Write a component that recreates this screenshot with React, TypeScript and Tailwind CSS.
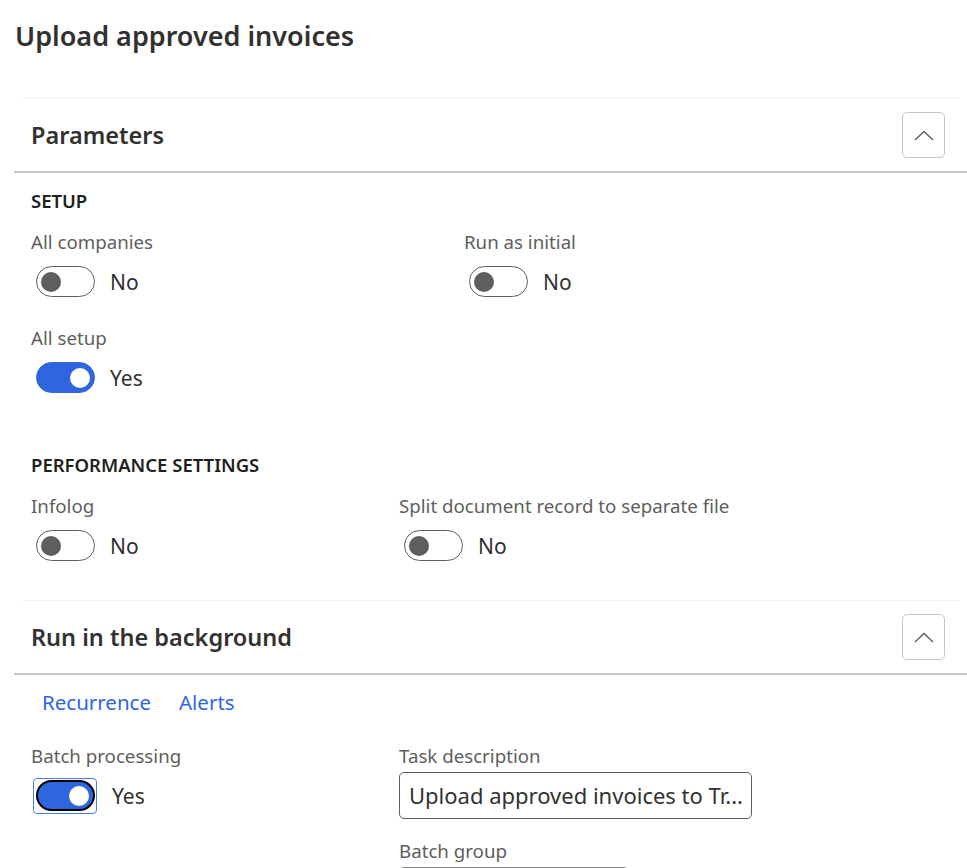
import React from "react";

const font = { fontFamily: '"Noto Sans", "Open Sans", Arial, sans-serif' };

function Chevron() {
  return (
    <button className="flex h-[46px] w-[43px] items-center justify-center rounded-[5px] border-[1.5px] border-[#c8c6c4] bg-white">
      <svg width="20" height="11" viewBox="0 0 20 11" fill="none">
        <path d="M1 10 L10 1.5 L19 10" stroke="#605e5c" strokeWidth="1.4" />
      </svg>
    </button>
  );
}

function Toggle({ on, focused }: { on?: boolean; focused?: boolean }) {
  const track = on
    ? "bg-[#2f66e0] justify-end " + (focused ? "border-[2.5px] border-black" : "border-[1.5px] border-[#2f66e0]")
    : "bg-white justify-start border-[1.5px] border-[#605e5c]";
  const knob = on ? "bg-white" : "bg-[#605e5c]";
  const sw = (
    <div className={"flex h-[31px] w-[59px] items-center rounded-full px-[4px] " + track}>
      <div className={"h-[20px] w-[20px] rounded-full " + knob} />
    </div>
  );
  return (
    <div className="flex h-[31px] items-center">
      {focused ? (
        <div className="-ml-[3px] -my-[3px] rounded-[4px] border-[1.5px] border-[#4a7ce6] p-[1.5px]">{sw}</div>
      ) : (
        sw
      )}
      <span className="ml-[15px] mt-[3px] text-[21px] text-[#323130]">{on ? "Yes" : "No"}</span>
    </div>
  );
}

function Label({ children }: { children: React.ReactNode }) {
  return <div className="h-[24px] text-[18.7px] leading-[24px] text-[#605e5c]">{children}</div>;
}

function Field({ label, children }: { label: string; children: React.ReactNode }) {
  return (
    <div className="flex flex-col">
      <Label>{label}</Label>
      <div className="mt-[12px] pl-[5px]">{children}</div>
    </div>
  );
}

function SectionHeader({ title }: { title: string }) {
  return (
    <>
      <div className="ml-[22px] mr-[7px] h-px bg-[#f3f2f1]" />
      <div className="flex h-[72px] items-center justify-between pl-[31px] pr-[22px]">
        <h2 className="mt-[2px] text-[23.5px] font-semibold text-[#323130]">{title}</h2>
        <Chevron />
      </div>
      <div className="ml-[14px] h-[2px] bg-[#c8c6c4]" />
    </>
  );
}

function GroupTitle({ children }: { children: React.ReactNode }) {
  return <div className="h-[20px] text-[18.5px] font-semibold uppercase leading-[20px] text-[#201f1e]">{children}</div>;
}

export default function App() {
  return (
    <div className="min-h-screen w-[967px] overflow-hidden bg-white" style={font}>
      {/* Dialog title */}
      <div className="h-[98px] pl-[15px] pt-[19px]">
        <h1 className="text-[27px] font-semibold leading-[34px] text-[#323130]">Upload approved invoices</h1>
      </div>

      <SectionHeader title="Parameters" />
      <div className="pl-[31px] pt-[18px]">
        <GroupTitle>Setup</GroupTitle>
        <div className="mt-[19px] grid grid-cols-[433px_1fr]">
          <Field label="All companies">
            <Toggle />
          </Field>
          <Field label="Run as initial">
            <Toggle />
          </Field>
        </div>
        <div className="mt-[29px]">
          <Field label="All setup">
            <Toggle on />
          </Field>
        </div>

        <div className="mt-[62px]">
          <GroupTitle>Performance settings</GroupTitle>
        </div>
        <div className="mt-[19px] grid grid-cols-[368px_1fr]">
          <Field label="Infolog">
            <Toggle />
          </Field>
          <Field label="Split document record to separate file">
            <Toggle />
          </Field>
        </div>
      </div>

      <div className="mt-[39px]">
        <SectionHeader title="Run in the background" />
      </div>
      <div className="pl-[31px] pt-[15px]">
        <div className="flex h-[24px] items-center gap-[28px] pl-[11px] text-[20.5px] leading-[24px] text-[#2f66e0]">
          <a>Recurrence</a>
          <a>Alerts</a>
        </div>
        <div className="mt-[30px] grid grid-cols-[368px_1fr]">
          <Field label="Batch processing">
            <Toggle on focused />
          </Field>
          <div className="flex flex-col">
            <Label>Task description</Label>
            <div className="mt-[4px] flex h-[47px] w-[353px] items-center rounded-[5px] border-[1.5px] border-[#605e5c] pl-[9px] text-[22px] text-[#323130]">
              Upload approved invoices to Tr...
            </div>
            <div className="mt-[20px]">
              <Label>Batch group</Label>
            </div>
            <div className="mt-[4px] h-[40px] w-[230px] rounded-[5px] border-[1.5px] border-[#8a8886]" />
          </div>
        </div>
      </div>
    </div>
  );
}
